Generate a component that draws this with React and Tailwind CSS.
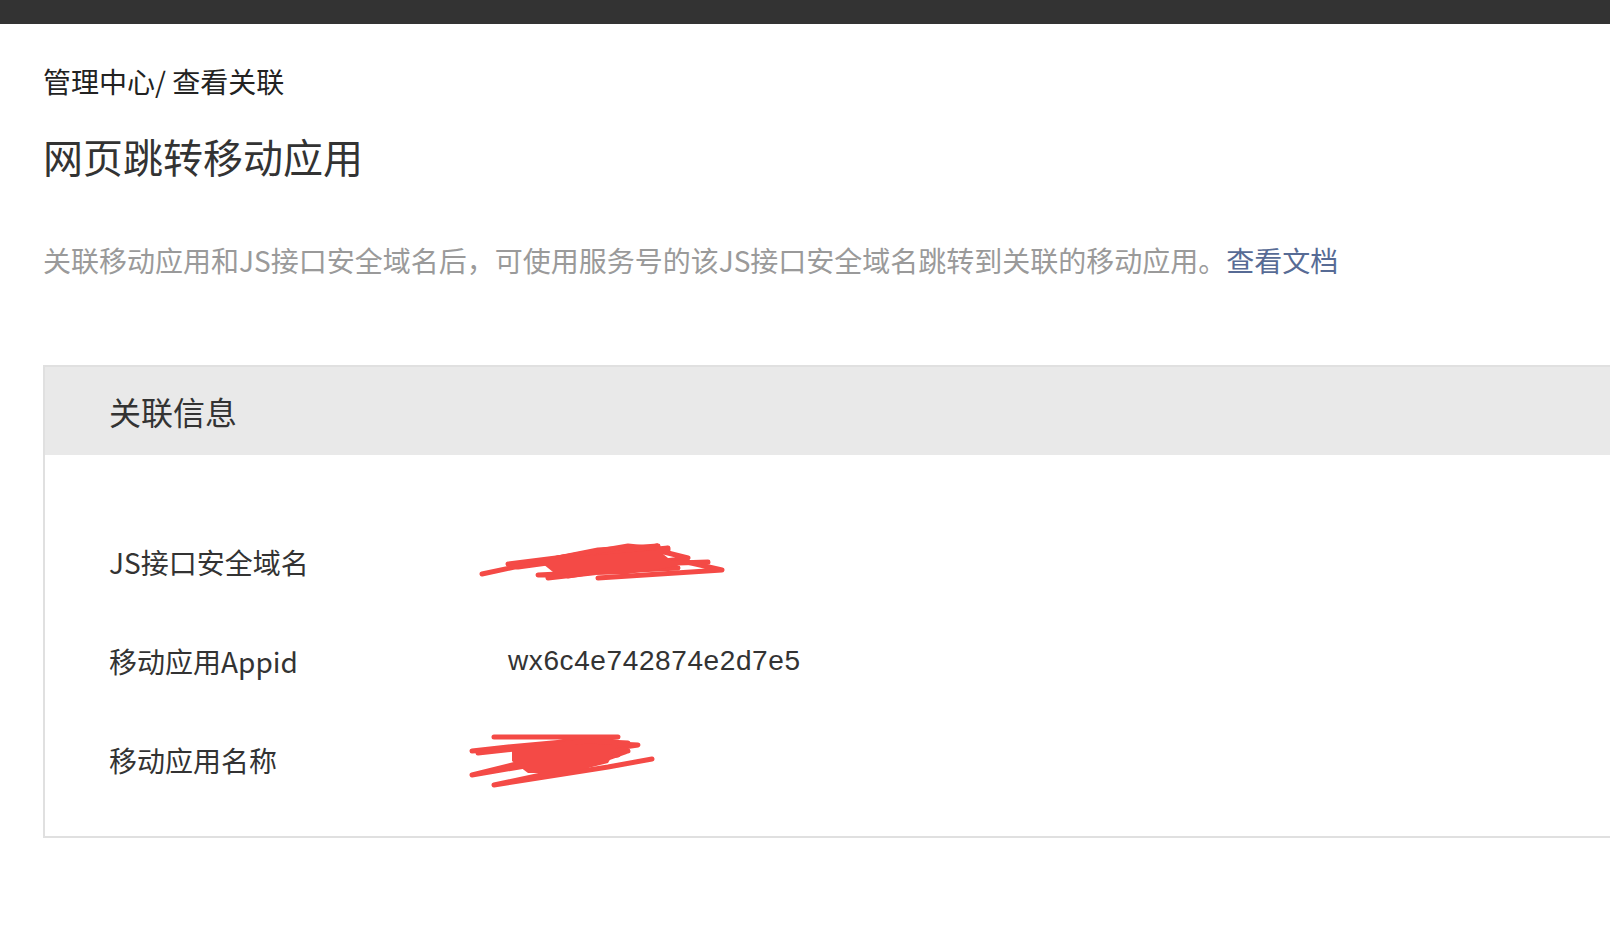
const font = { fontFamily: '"Noto Sans CJK SC", "Liberation Sans", sans-serif' }

function Scribble({ wide }) {
  if (wide) {
    return (
      <svg width="250" height="44" viewBox="0 0 250 44" className="-ml-[30px] shrink-0">
        <g fill="none" stroke="#f44a46" strokeWidth="5" strokeLinecap="round" strokeLinejoin="round">
          <path d="M4 34 L60 22 L120 10 L180 6 L96 18 L40 27 L150 12 L190 8 L130 24 L70 38 L140 30 L200 28 L60 35" />
          <path d="M30 24 L110 14 L170 8 L210 18 L150 26 L90 36 L160 22 L200 20 L244 30 L120 38" />
          <path d="M80 18 L150 6 L190 10 L130 30 L90 26 L170 24 L230 22" />
        </g>
        <path d="M60 20 L180 10 L200 26 L150 34 L80 36 Z" fill="#f44a46" />
      </svg>
    )
  }
  return (
    <svg width="190" height="58" viewBox="0 0 190 58" className="-ml-[40px] shrink-0">
      <g fill="none" stroke="#f44a46" strokeWidth="5" strokeLinecap="round" strokeLinejoin="round">
        <path d="M26 6 L150 6 L40 16 L4 20 L130 12 L170 14 L60 30 L4 44 L110 26 L160 20 L120 34 L26 54 L140 36 L184 28" />
        <path d="M10 22 L120 10 L160 12 L90 28 L40 36 L150 24" />
      </g>
      <path d="M44 14 L150 14 L140 32 L100 42 L60 42 L44 30 Z" fill="#f44a46" />
    </svg>
  )
}

function Row({ label, children }) {
  return (
    <div className="flex items-center h-[99px]">
      <div className="w-[399px] shrink-0 text-[28px] text-[#333333]">{label}</div>
      <div className="flex items-center text-[28px] text-[#333333]">{children}</div>
    </div>
  )
}

export default function App() {
  return (
    <div className="min-h-[938px] bg-white overflow-hidden" style={font}>
      <div className="h-[24px] bg-[#333333]" />
      <div className="pl-[43px]">
        <div className="mt-[37px] text-[28px] leading-[40px] text-[#222222]">管理中心/ 查看关联</div>
        <h1 className="mt-[27px] text-[40px] leading-[56px] text-[#333333]">网页跳转移动应用</h1>
        <p className="mt-[56px] text-[28px] leading-[40px] text-[#9a9a9a]">
          关联移动应用和JS接口安全域名后，可使用服务号的该JS接口安全域名跳转到关联的移动应用。
          <a className="text-[#576b95]">查看文档</a>
        </p>
        <div className="mt-[85px] w-[1620px] border-2 border-[#e0e0e0]">
          <div className="h-[88px] bg-[#e9e9e9] flex items-center pl-[64px] text-[32px] text-[#333333]">关联信息</div>
          <div className="pl-[64px] pt-[57px] pb-[27px]">
            <Row label="JS接口安全域名">
              <Scribble wide />
            </Row>
            <Row label="移动应用Appid">
              <span className="tracking-[0.6px]" style={{ fontFamily: '"Liberation Sans", sans-serif' }}>wx6c4e742874e2d7e5</span>
            </Row>
            <Row label="移动应用名称">
              <Scribble />
            </Row>
          </div>
        </div>
      </div>
    </div>
  )
}
